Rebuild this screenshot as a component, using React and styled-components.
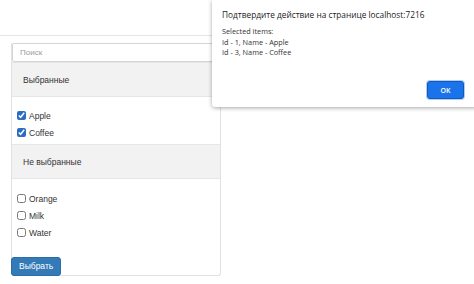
import styled, { createGlobalStyle } from 'styled-components'

const GlobalStyle = createGlobalStyle`
  html, body {
    margin: 0;
    padding: 0;
    background: #fff;
    overflow: hidden;
  }
  body {
    font-family: "Liberation Sans", Arial, sans-serif;
    color: #333;
  }
`

const Page = styled.div`
  position: relative;
  width: 474px;
  height: 284px;
`

const Navbar = styled.div`
  height: 35px;
  border-bottom: 1px solid #e6e6e6;
`

const Container = styled.div`
  padding: 7px 0 0 11px;
`

const Card = styled.div`
  width: 208px;
  border: 1px solid #e2e2e2;
  border-top: none;
  border-radius: 0 0 3px 3px;
  box-sizing: content-box;
`

const Search = styled.input`
  display: block;
  width: 100%;
  height: 19px;
  box-sizing: border-box;
  border: 1px solid #d4d4d4;
  border-radius: 2px;
  padding: 0 7px;
  font-family: inherit;
  font-size: 8px;
  outline: none;

  &::placeholder {
    color: #9a9a9a;
  }
`

const SectionHeader = styled.div`
  height: ${p => p.$h}px;
  display: flex;
  align-items: center;
  padding-left: 11px;
  background: #f2f2f2;
  border-top: 1px solid #e6e6e6;
  border-bottom: 1px solid #e6e6e6;
  font-size: 8.5px;
  color: #333;
  box-sizing: border-box;
`

const List = styled.div`
  padding: ${p => p.$top}px 0 3px 5px;
`

const Row = styled.label`
  height: 17px;
  display: flex;
  align-items: center;
  gap: 3px;
  font-size: 8.5px;
  color: #333;
`

const Box = styled.input`
  margin: 0;
  width: 9px;
  height: 9px;
  accent-color: #2b6cc4;
`

const Actions = styled.div`
  padding-top: ${p => p.$top}px;
`

const Button = styled.button`
  height: 19px;
  margin-left: -1px;
  margin-bottom: -1px;
  padding: 0 7px;
  border: 1px solid #2e6da4;
  border-radius: 3px;
  background: #337ab7;
  color: #fff;
  font-family: inherit;
  font-size: 8.5px;
`

const Dialog = styled.div`
  position: absolute;
  top: 0;
  left: 212px;
  right: -4px;
  height: 107px;
  background: #fff;
  box-shadow: 0 1px 4px rgba(0, 0, 0, 0.35);
  border-radius: 0 0 3px 3px;
  padding: 9px 0 0 10px;
  box-sizing: border-box;
  font-family: "Open Sans", "Noto Sans", sans-serif;
  color: #222;
`

const DialogTitle = styled.div`
  font-size: 8.3px;
  line-height: 12px;
  margin-bottom: 5px;
`

const DialogText = styled.div`
  font-size: 7.3px;
  line-height: 10.7px;
  color: #333;
`

const DialogFooter = styled.div`
  display: flex;
  justify-content: flex-end;
  padding: 23px 14px 0 0;
`

const OkButton = styled.button`
  width: 37px;
  height: 18px;
  border: 1px solid #1559b8;
  border-radius: 3px;
  background: #1a73e8;
  box-shadow: 0 0 0 1px rgba(26, 115, 232, 0.35);
  color: #fff;
  font-family: "Open Sans", "Noto Sans", sans-serif;
  font-size: 7px;
  font-weight: 600;
  padding: 0;
`

const selected = [
  { id: 1, name: 'Apple' },
  { id: 3, name: 'Coffee' },
]

const unselected = [
  { id: 2, name: 'Orange' },
  { id: 4, name: 'Milk' },
  { id: 5, name: 'Water' },
]

export default function App() {
  return (
    <Page>
      <GlobalStyle />
      <Navbar />
      <Container>
        <Card>
          <Search placeholder="Поиск" />
          <SectionHeader $h={35}>Выбранные</SectionHeader>
          <List $top={10}>
            {selected.map(item => (
              <Row key={item.id}>
                <Box type="checkbox" defaultChecked />
                {item.name}
              </Row>
            ))}
          </List>
          <SectionHeader $h={35}>Не выбранные</SectionHeader>
          <List $top={11}>
            {unselected.map(item => (
              <Row key={item.id}>
                <Box type="checkbox" />
                {item.name}
              </Row>
            ))}
          </List>
          <Actions $top={11}>
            <Button>Выбрать</Button>
          </Actions>
        </Card>
      </Container>

      <Dialog>
        <DialogTitle>Подтвердите действие на странице localhost:7216</DialogTitle>
        <DialogText>
          Selected items:
          <br />
          Id - 1, Name - Apple
          <br />
          Id - 3, Name - Coffee
        </DialogText>
        <DialogFooter>
          <OkButton>OK</OkButton>
        </DialogFooter>
      </Dialog>
    </Page>
  )
}
